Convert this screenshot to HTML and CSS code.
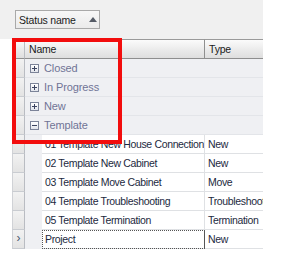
FILE: index.html
```html
<!DOCTYPE html>
<html>
<head>
<meta charset="utf-8">
<link rel="stylesheet" href="styles.css">
</head>
<body>
<div class="view">
  <div class="panel">
    <div class="groupbtn">Status name <span class="arrow"></span></div>
  </div>
  <div class="grid">
    <div class="row header">
      <div class="ind"></div>
      <div class="hcell name">Name</div>
      <div class="hcell type">Type</div>
    </div>
    <div class="row group">
      <div class="ind"></div>
      <div class="gcell"><span class="exp plus"></span>Closed</div>
    </div>
    <div class="row group">
      <div class="ind"></div>
      <div class="gcell"><span class="exp plus"></span>In Progress</div>
    </div>
    <div class="row group">
      <div class="ind"></div>
      <div class="gcell"><span class="exp plus"></span>New</div>
    </div>
    <div class="row group">
      <div class="ind"></div>
      <div class="gcell"><span class="exp minus"></span>Template</div>
    </div>
    <div class="row data">
      <div class="ind"></div><div class="indent"></div>
      <div class="cell dname">01 Template New House Connection</div>
      <div class="cell dtype">New</div>
    </div>
    <div class="row data">
      <div class="ind"></div><div class="indent"></div>
      <div class="cell dname">02 Template New Cabinet</div>
      <div class="cell dtype">New</div>
    </div>
    <div class="row data">
      <div class="ind"></div><div class="indent"></div>
      <div class="cell dname">03 Template Move Cabinet</div>
      <div class="cell dtype">Move</div>
    </div>
    <div class="row data">
      <div class="ind"></div><div class="indent"></div>
      <div class="cell dname">04 Template Troubleshooting</div>
      <div class="cell dtype">Troubleshooting</div>
    </div>
    <div class="row data">
      <div class="ind"></div><div class="indent"></div>
      <div class="cell dname">05 Template Termination</div>
      <div class="cell dtype">Termination</div>
    </div>
    <div class="row data">
      <div class="ind cur">›</div><div class="indent"></div>
      <div class="cell dname focus">Project</div>
      <div class="cell dtype">New</div>
    </div>
  </div>
  <div class="highlight"></div>
</div>
</body>
</html>
```
FILE: styles.css
```css
* { box-sizing: border-box; }
body {
  margin: 0;
  background: #ffffff;
  font-family: "Liberation Sans", Arial, sans-serif;
  font-size: 10.5px;
  color: #1c2940;
}
.view {
  position: relative;
  width: 285px;
  height: 258px;
}
.panel {
  width: 263px;
  height: 39px;
  background: #f0f0f0;
  padding: 10px 0 0 15px;
}
.groupbtn {
  display: flex;
  align-items: center;
  width: 85px;
  height: 19px;
  border: 1px solid #a9a9a9;
  background: linear-gradient(#f7f7f7, #ebebeb);
  padding-left: 3px;
  color: #1b1b1b;
  letter-spacing: -0.2px;
}
.arrow {
  margin-left: 13px;
  width: 0;
  height: 0;
  border-left: 4px solid transparent;
  border-right: 4px solid transparent;
  border-bottom: 5px solid #555b66;
}
.grid {
  margin-left: 12px;
  width: 251px;
  background: #eef0f3;
}
.row {
  display: flex;
  height: 19px;
}
.ind {
  width: 13px;
  flex: none;
  background: linear-gradient(#f2f2f2, #e3e3e3);
  border-right: 1px solid #b9bcc2;
  border-bottom: 1px solid #c9ccd1;
  border-left: 1px solid #d0d2d6;
  font-size: 12px;
  line-height: 17px;
  text-align: center;
  color: #4c5770;
}
.header { height: 20px; }
.header .ind,
.hcell {
  background: linear-gradient(#fbfbfb, #e9e9e9 60%, #dedede);
  border-top: 1px solid #9a9a9a;
  border-bottom: 1px solid #8e8e8e;
}
.hcell {
  display: flex;
  align-items: center;
  padding-left: 4px;
  color: #1a1a1a;
  letter-spacing: -0.2px;
}
.hcell.name { width: 180px; border-right: 1px solid #8f8f8f; }
.hcell.type { width: 58px; }
.group .gcell {
  flex: 1;
  display: flex;
  align-items: center;
  padding-left: 5px;
  background: #eff0f3;
  border-bottom: 1px solid #e3e5e9;
  color: #6f7496;
  font-size: 11px;
  letter-spacing: -0.1px;
}
.exp {
  position: relative;
  width: 9px;
  height: 9px;
  margin-right: 5px;
  border: 1px solid #7c8499;
  background: linear-gradient(#ffffff, #e2e5ec);
  flex: none;
}
.exp::before {
  content: "";
  position: absolute;
  left: 1px;
  top: 3px;
  width: 5px;
  height: 1px;
  background: #3c4460;
}
.exp.plus::after {
  content: "";
  position: absolute;
  left: 3px;
  top: 1px;
  width: 1px;
  height: 5px;
  background: #3c4460;
}
.indent {
  width: 17px;
  flex: none;
  background: #eff0f3;
}
.cell {
  display: flex;
  align-items: center;
  background: #ffffff;
  border-bottom: 1px solid #dfe1e4;
  padding-left: 3px;
  white-space: nowrap;
  overflow: hidden;
  letter-spacing: -0.35px;
}
.dname { width: 163px; border-right: 1px solid #dfe1e4; }
.dtype { width: 58px; }
.focus {
  outline: 1px dotted #555555;
  outline-offset: -1px;
  border-right-color: #555;
}
.highlight {
  position: absolute;
  left: 12px;
  top: 38px;
  width: 110px;
  height: 106px;
  border: 4px solid #f20d0d;
}
```
